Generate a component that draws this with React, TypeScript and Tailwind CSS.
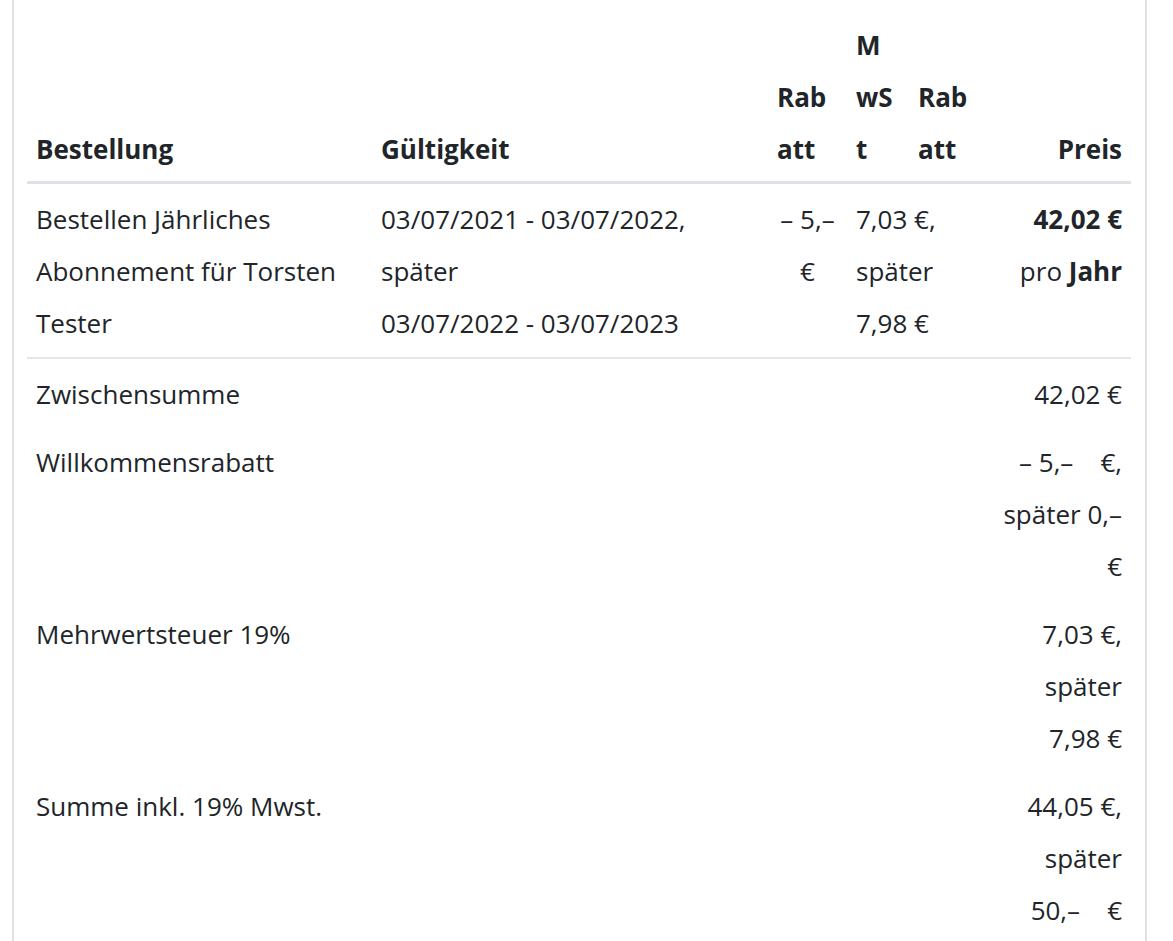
import React from "react";

const font = "[font-family:'Open_Sans','Noto_Sans',sans-serif]";

function SummaryRow({ label, value }: { label: string; value: React.ReactNode }) {
  return (
    <tr>
      <td colSpan={5} className="px-[9px] pt-[9px] pb-[7px] align-top whitespace-nowrap">
        {label}
      </td>
      <td className="px-[9px] pt-[9px] pb-[7px] align-top text-right whitespace-nowrap">{value}</td>
    </tr>
  );
}

export default function App() {
  return (
    <div className={`min-h-[941px] bg-white ${font}`}>
      <div className="ml-[12px] min-h-[941px] w-[1135px] border-x-2 border-[#dfe0e3] px-[13px] pt-[10px]">
        <table className="w-[1104px] table-fixed border-collapse text-[26px] leading-[52px] text-[#212529]">
          <colgroup>
            <col className="w-[345px]" />
            <col className="w-[396px]" />
            <col className="w-[79px]" />
            <col className="w-[62px]" />
            <col className="w-[68px]" />
            <col />
          </colgroup>
          <thead>
            <tr className="border-b-[3px] border-[#dee2e6] font-bold">
              <th className="px-[9px] pt-[9px] pb-[6px] text-left align-bottom">Bestellung</th>
              <th className="px-[9px] pt-[9px] pb-[6px] text-left align-bottom">Gültigkeit</th>
              <th className="px-[9px] pt-[9px] pb-[6px] text-left align-bottom whitespace-nowrap">
                Rab
                <br />
                att
              </th>
              <th className="px-[9px] pt-[9px] pb-[6px] text-left align-bottom whitespace-nowrap">
                M
                <br />
                wS
                <br />t
              </th>
              <th className="px-[9px] pt-[9px] pb-[6px] text-left align-bottom whitespace-nowrap">
                Rab
                <br />
                att
              </th>
              <th className="px-[9px] pt-[9px] pb-[6px] text-right align-bottom">Preis</th>
            </tr>
          </thead>
          <tbody>
            <tr className="border-b-2 border-[#e3e5e8]">
              <td className="px-[9px] pt-[9px] pb-[8px] align-top whitespace-nowrap">
                Bestellen Jährliches
                <br />
                Abonnement für Torsten
                <br />
                Tester
              </td>
              <td className="px-[9px] pt-[9px] pb-[8px] align-top whitespace-nowrap">
                03/07/2021 - 03/07/2022,
                <br />
                später
                <br />
                03/07/2022 - 03/07/2023
              </td>
              <td className="px-[9px] pt-[9px] pb-[8px] align-top text-center whitespace-nowrap">
                – 5,–
                <br />€
              </td>
              <td className="px-[9px] pt-[9px] pb-[8px] align-top whitespace-nowrap">
                7,03 €,
                <br />
                später
                <br />
                7,98 €
              </td>
              <td className="px-[9px] pt-[9px] pb-[8px]" />
              <td className="px-[9px] pt-[9px] pb-[8px] align-top text-right whitespace-nowrap">
                <b className="font-bold">42,02 €</b>
                <br />
                pro <b className="font-bold">Jahr</b>
              </td>
            </tr>
            <SummaryRow label="Zwischensumme" value="42,02 €" />
            <SummaryRow
              label="Willkommensrabatt"
              value={
                <>
                  – 5,–{"\u00a0\u00a0\u00a0 "}€,
                  <br />
                  später 0,–
                  <br />€
                </>
              }
            />
            <SummaryRow
              label="Mehrwertsteuer 19%"
              value={
                <>
                  7,03 €,
                  <br />
                  später
                  <br />
                  7,98 €
                </>
              }
            />
            <SummaryRow
              label="Summe inkl. 19% Mwst."
              value={
                <>
                  44,05 €,
                  <br />
                  später
                  <br />
                  50,–{"\u00a0\u00a0\u00a0 "}€
                </>
              }
            />
          </tbody>
        </table>
      </div>
    </div>
  );
}
